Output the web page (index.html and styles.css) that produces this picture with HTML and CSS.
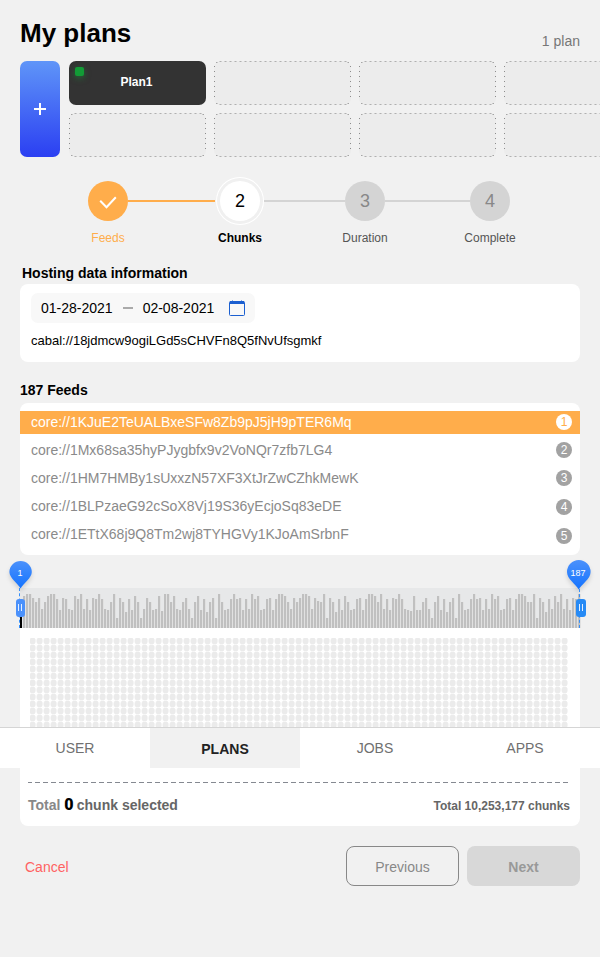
FILE: index.html
```html
<!DOCTYPE html>
<html lang="en">
<head>
<meta charset="utf-8">
<title>My plans</title>
<link rel="stylesheet" href="styles.css">
</head>
<body>
<main class="page">
  <header class="header"><h1>My plans</h1><span class="count">1 plan</span></header>

  <section class="plans">
    <button class="add" aria-label="Add plan"><svg width="12" height="12" viewBox="0 0 12 12"><path d="M6 0v12M0 6h12" stroke="#fff" stroke-width="2"/></svg></button>
    <div class="slots">
      <div class="slot active"><i class="status"></i>Plan1</div>
      <div class="slot"><svg width="137" height="44"><g id="outline" fill="none"><path d="M5.5 .5h127M5.5 43.5h127" stroke="#b0b0b0" stroke-dasharray="2 3"/><path d="M.5 5v34M136.5 5v34" stroke="#8c8c8c" stroke-dasharray="1 4"/><path d="M2 1.5h1.5M133.5 1.5h1.5M2 42.5h1.5M133.5 42.5h1.5" stroke="#a5a5a5"/></g></svg></div>
      <div class="slot"><svg width="137" height="44"><use href="#outline"/></svg></div>
      <div class="slot"><svg width="137" height="44"><use href="#outline"/></svg></div>
      <div class="slot"><svg width="137" height="44"><use href="#outline"/></svg></div>
      <div class="slot"><svg width="137" height="44"><use href="#outline"/></svg></div>
      <div class="slot"><svg width="137" height="44"><use href="#outline"/></svg></div>
      <div class="slot"><svg width="137" height="44"><use href="#outline"/></svg></div>
    </div>
  </section>

  <nav class="steps">
    <div class="step done"><span class="dot"><svg width="18" height="13" viewBox="0 0 18 13"><path d="M1.2 4.8L7.5 11.2L16.8 1.2" fill="none" stroke="#fff" stroke-width="2"/></svg></span><span class="label">Feeds</span></div>
    <i class="line first"></i>
    <div class="step current"><span class="dot">2</span><span class="label">Chunks</span></div>
    <i class="line second"></i>
    <div class="step"><span class="dot">3</span><span class="label">Duration</span></div>
    <i class="line third"></i>
    <div class="step"><span class="dot">4</span><span class="label">Complete</span></div>
  </nav>

  <h2 class="hosting-title">Hosting data information</h2>
  <section class="card hosting">
    <div class="dates"><span class="date">01-28-2021</span><i class="dash"></i><span class="date">02-08-2021</span>
      <svg class="calendar" width="16" height="16" viewBox="0 0 16 16"><rect x=".5" y="1.5" width="15" height="14" rx="1" fill="none" stroke="#1b5fd0"/><path d="M1 1h14v3H1z" fill="#1b5fd0"/><path d="M3 0h1v1H3zM12 0h1v1h-1z" fill="#1b5fd0" opacity=".5"/></svg>
    </div>
    <p class="address">cabal://18jdmcw9ogiLGd5sCHVFn8Q5fNvUfsgmkf</p>
  </section>

  <h2 class="feeds-title">187 Feeds</h2>
  <ul class="card feeds">
    <li class="selected"><span>core://1KJuE2TeUALBxeSFw8Zb9pJ5jH9pTER6Mq</span><b>1</b></li>
    <li><span>core://1Mx68sa35hyPJygbfx9v2VoNQr7zfb7LG4</span><b>2</b></li>
    <li><span>core://1HM7HMBy1sUxxzN57XF3XtJrZwCZhkMewK</span><b>3</b></li>
    <li class="low"><span>core://1BLPzaeG92cSoX8Vj19S36yEcjoSq83eDE</span><b>4</b></li>
    <li class="lower"><span>core://1ETtX68j9Q8Tm2wj8TYHGVy1KJoAmSrbnF</span><b>5</b></li>
  </ul>

  <section class="range">
    <div class="wave" id="wave"></div>
    <div class="marker start">
      <svg class="pin" width="24" height="28" viewBox="0 0 24 28"><defs><linearGradient id="pinfill" x2="0" y2="1"><stop stop-color="#4b91fb"/><stop offset="1" stop-color="#1473ff"/></linearGradient></defs><path d="M11.6 27.5C8.6 22 .4 17 .4 11A11.2 11 0 0 1 22.8 11C22.8 17 14.6 22 11.6 27.5Z" fill="url(#pinfill)"/></svg>
      <span class="pin-text">1</span><i class="stem"></i><i class="grip"></i>
    </div>
    <div class="marker end">
      <svg class="pin" width="24" height="30" viewBox="0 0 24 30"><path d="M11.7 29.5C8.7 24 0 19 0 12A11.8 12 0 0 1 23.6 12C23.6 19 14.7 24 11.7 29.5Z" fill="url(#pinfill)"/></svg>
      <span class="pin-text">187</span><i class="stem"></i><i class="grip"></i>
    </div>
  </section>

  <section class="chunks">
    <svg class="cells" width="539" height="97"><defs><pattern id="cell" width="7" height="7" patternUnits="userSpaceOnUse"><path d="M0 3h7M2.5 0v7" stroke="#f7f7f7" stroke-width="3"/><rect x="0" y="0" width="5.2" height="6" rx="1.2" fill="#ebebeb"/></pattern></defs><rect width="538" height="97" fill="url(#cell)"/></svg>
    <svg class="divider" width="540" height="1"><path d="M0 .5h540" stroke="#858991" stroke-dasharray="5 3" stroke-dashoffset="1"/></svg>
    <div class="totals"><p class="picked"><span>Total</span> <strong>0</strong> chunk selected</p><p class="all">Total 10,253,177 chunks</p></div>
  </section>

  <footer class="actions"><a class="cancel">Cancel</a><button class="btn previous">Previous</button><button class="btn next">Next</button></footer>
</main>
<nav class="tabs"><a>USER</a><a class="on">PLANS</a><a>JOBS</a><a>APPS</a></nav>
<script src="wave.js"></script>
</body>
</html>
```
FILE: styles.css
```css
* { box-sizing: border-box; }
html, body { margin: 0; overflow: hidden; background: #f1f1f1; }
body { position: relative; width: 600px; height: 957px; font-family: "Liberation Sans", Arial, sans-serif; color: #000; }
h1, h2, p, ul { margin: 0; padding: 0; }
button { font-family: inherit; border: 0; padding: 0; }
.page { padding: 0 20px; }

.header { height: 61px; display: flex; justify-content: space-between; }
.header h1 { font-size: 26px; line-height: 30px; padding-top: 18px; }
.count { font-size: 14px; line-height: 16px; padding-top: 33px; color: #777; }

.plans { display: flex; gap: 9px; height: 96px; width: 580px; overflow: hidden; }
.add { flex: none; width: 40px; height: 96px; border-radius: 7px; background: linear-gradient(#5f95f8, #2b3ff2); display: flex; align-items: center; justify-content: center; }
.slots { flex: none; display: grid; grid-template-columns: repeat(4, 137px); grid-template-rows: 44px 44px; gap: 8px; }
.slot { position: relative; border-radius: 7px; background: #ececec; }
.slot svg { display: block; }
.slot.active { background: #333; color: #fff; font-size: 12px; font-weight: bold; line-height: 42px; text-align: center; padding-right: 2px; }
.status { position: absolute; left: 6px; top: 6px; width: 9px; height: 9px; border-radius: 2px; background: #129c36; box-shadow: 0 2px 6px #129c3688; }

.steps { display: flex; height: 108px; padding: 24px 0 0 68px; }
.step { width: 40px; display: flex; flex-direction: column; align-items: center; font-size: 12px; color: #555; }
.dot { width: 40px; height: 40px; border-radius: 50%; background: #d4d4d4; color: #888; font-size: 18px; line-height: 40px; text-align: center; }
.label { margin-top: 10px; line-height: 14px; white-space: nowrap; }
.done { color: #ffad4b; }
.done .dot { background: #ffad4b; display: flex; align-items: center; justify-content: center; padding-top: 3px; }
.current { color: #000; font-weight: bold; }
.current .dot { background: #fff; color: #000; font-weight: normal; box-shadow: 0 0 0 3px #f0f0f0, 0 0 0 4px #fff; }
.line { height: 2px; margin-top: 19px; background: #d4d4d4; }
.line.first { width: 87px; margin-right: 5px; background: #ffad4b; }
.line.second { width: 81px; margin-left: 4px; }
.line.third { width: 85px; }

h2 { font-size: 14px; line-height: 16px; }
.hosting-title { padding-left: 2px; }
.card { background: #fff; border-radius: 8px; }
.hosting { margin-top: 3px; height: 78px; padding: 9px 11px; }
.dates { display: flex; align-items: center; width: 224px; height: 30px; padding-left: 10px; border-radius: 7px; background: #f8f8f8; font-size: 14px; }
.dash { width: 10px; height: 2px; margin: 0 10px; background: #aaa; }
.calendar { margin-left: 15px; }
.address { margin-top: 10px; font-size: 13px; line-height: 15px; }

.feeds-title { margin-top: 20px; }
.feeds { height: 152px; margin-top: 5px; padding-top: 8px; list-style: none; font-size: 14px; color: #8a8a8a; }
.feeds li { display: flex; justify-content: space-between; height: 28px; padding: 3px 8px 0 11px; line-height: 16px; }
.feeds b { width: 16px; height: 16px; border-radius: 50%; background: #a2a2a2; color: #fff; font-size: 12px; font-weight: normal; text-align: center; line-height: 16px; }
.feeds .selected { height: 23px; margin-bottom: 5px; background: #ffad4b; color: #fff; }
.feeds .selected b { background: #fff; color: #ffad4b; }
.feeds .low b { margin-top: 1px; }
.feeds .lower b { margin-top: 2px; }

.range { position: relative; height: 40px; margin-top: 33px; background: #e7e8e9; }
.wave { display: flex; align-items: flex-end; height: 40px; width: 561px; }
.wave i { width: 3px; background: linear-gradient(90deg, #c0c0c0 2px, #e1e1e1 2px); }
.wave i:first-child { background: #000; width: 2px; margin-right: 1px; }
.marker { position: absolute; width: 24px; }
.start { left: -11px; top: -27px; }
.end { left: 547px; top: -28px; }
.pin { display: block; filter: drop-shadow(0 3px 2px #0002); }
.pin-text { position: absolute; left: -1px; width: 24px; top: 6px; text-align: center; font-size: 9px; line-height: 12px; color: #fff; }
.end .pin-text { top: 7px; }
.stem { position: absolute; left: 10px; top: 27px; height: 40px; border-left: 1px dashed #368ff8; }
.end .stem { left: 12px; top: 29px; height: 39px; }
.grip { position: absolute; left: 6.5px; top: 38px; width: 9.5px; height: 18px; border-radius: 3px; background: #4b91fb; }
.end .grip { left: 9px; top: 39px; background: #268af5; }
.grip::before { content: ""; box-sizing: border-box; position: absolute; left: 2.5px; top: 5px; width: 4px; height: 7px; border: solid #e4efff; border-width: 0 1px; }

.chunks { height: 198px; padding: 10px 8px 0; background: #fff; border-radius: 0 0 8px 8px; }
.cells { display: block; margin-left: 2px; }
.divider { display: block; margin-top: 47px; }
.totals { display: flex; justify-content: space-between; align-items: baseline; padding: 12px 2px 0 0; font-weight: bold; color: #666; }
.picked { font-size: 14px; line-height: 20px; }
.picked span { color: #888; }
.picked strong { color: #000; font-family: Roboto, sans-serif; font-size: 16px; line-height: 16px; letter-spacing: -.7px; }
.all { font-size: 12px; }

.actions { display: flex; align-items: center; height: 40px; margin-top: 20px; }
.cancel { flex: 1; padding: 2px 0 0 5px; font-size: 14px; color: #ff6262; }
.btn { width: 113px; height: 40px; border-radius: 8px; padding-top: 2px; font-size: 14px; color: #888; background: transparent; }
.previous { border: 1px solid #888; }
.next { margin-left: 8px; background: #d8d8d8; color: #999; font-weight: bold; }

.tabs { position: absolute; left: 0; top: 727px; width: 600px; height: 41px; display: flex; border-top: 1px solid #d5d5d5; background: #fff; }
.tabs a { flex: 1; text-align: center; font-size: 14px; line-height: 40px; color: #707070; }
.tabs .on { background: #f1f1f1; color: #222; font-weight: bold; line-height: 42px; }
```
FILE: wave.js
```js
// Bar heights in thirds of a pixel
const levels = [33,
  96,102,102,90,78,90,56,78,96,102,102,87,54,90,87,56,54,96,87,102,56,87,54,90,87,102,87,56,54,78,102,29,90,78,48,87,54,96,78,29,56,90,78,54,56,96,51,102,102,78,96,56,54,78,90,56,29,78,96,
  54,87,48,78,90,30,102,78,54,57,87,102,87,90,54,87,57,102,87,96,54,57,87,90,54,87,102,102,96,78,57,90,78,90,102,102,96,57,90,81,78,102,30,90,78,48,87,54,96,78,54,57,87,90,54,87,102,102,96,78,102,57,87,54,90,87,102,
  87,56,54,51,96,54,54,78,90,56,29,78,96,54,87,48,78,90,29,102,78,54,56,87,102,87,90,54,87,56,102,87,96,54,56,87,90,54,87,102,102,96,78,78,102,29,90,78,48,87,56,96,78,102,56,87,54,90,87,102];
const wave = document.getElementById("wave");
for (const level of levels) {
  const bar = document.createElement("i");
  bar.style.height = level / 3 + "px";
  wave.append(bar);
}
```
